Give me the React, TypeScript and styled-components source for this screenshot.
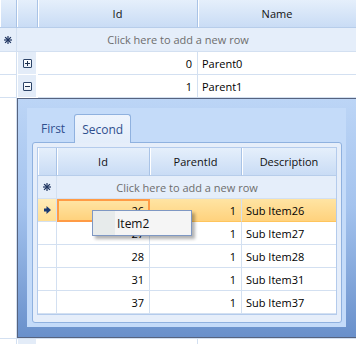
import { Fragment } from "react";
import styled, { createGlobalStyle, css } from "styled-components";

const GlobalStyle = createGlobalStyle`
    * {
        box-sizing: border-box;
    }
    body {
        margin: 0;
        background: #ffffff;
        font-family: "Open Sans", "Noto Sans", sans-serif;
        font-size: 11px;
        color: #000000;
        overflow: hidden;
    }
`;

const Page = styled.div`
    position: relative;
    width: 356px;
    height: 344px;
    overflow: hidden;
`;

// outer master grid
const MasterGrid = styled.div`
    display: grid;
    grid-template-columns: 17px 21px 160px 1fr;
`;

const headerBg = css`
    background: linear-gradient(#e5effb, #c9dcf5);
`;

const HeadCell = styled.div<{ $last?: boolean }>`
    ${headerBg};
    height: 28px;
    display: flex;
    align-items: center;
    justify-content: center;
    border-right: ${(p) => (p.$last ? "none" : "1px solid #a9c3e6")};
    border-bottom: 1px solid #b7cdea;
    box-shadow: inset 1px 0 0 #ffffff;
    color: #111;
`;

const IndicatorCell = styled.div<{ $kind?: "new" | "plain" | "current"; $h?: number }>`
    height: ${(p) => p.$h ?? 23}px;
    display: flex;
    align-items: center;
    justify-content: center;
    border-right: 1px solid #d3e0f1;
    border-bottom: 1px solid #d3e0f1;
    background: ${(p) =>
        p.$kind === "new" ? "#e5eefa" : p.$kind === "current" ? "linear-gradient(#ffecb8, #ffdf95)" : "#ffffff"};
`;

const NewRowText = styled.div<{ $span: string; $shift: number; $h?: number }>`
    grid-column: ${(p) => p.$span};
    height: ${(p) => p.$h ?? 24}px;
    display: flex;
    align-items: center;
    justify-content: center;
    padding-right: ${(p) => p.$shift}px;
    background: #e5eefa;
    color: #6d6d6d;
    border-bottom: 1px solid #d3e0f1;
`;

const ExpandCell = styled.div`
    height: 23px;
    display: flex;
    align-items: center;
    justify-content: center;
    background: #e3ecf8;
    border-right: 2px solid #ffffff;
    border-bottom: 1px solid #ffffff;
    border-left: 1px solid #ffffff;
`;

const ExpandBox = styled.div`
    width: 9px;
    height: 9px;
    border: 1px solid #2d4468;
    border-radius: 1px;
    background: linear-gradient(#ffffff, #e8eef6);
    position: relative;
    &::before {
        content: "";
        position: absolute;
        left: 1px;
        right: 1px;
        top: 3px;
        height: 1px;
        background: #1d2f4d;
    }
`;

const PlusBox = styled(ExpandBox)`
    &::after {
        content: "";
        position: absolute;
        top: 1px;
        bottom: 1px;
        left: 3px;
        width: 1px;
        background: #1d2f4d;
    }
`;

const Cell = styled.div<{ $right?: boolean; $last?: boolean; $h?: number }>`
    height: ${(p) => p.$h ?? 23}px;
    display: flex;
    align-items: center;
    justify-content: ${(p) => (p.$right ? "flex-end" : "flex-start")};
    padding: 0 4px 0 4px;
    padding-right: ${(p) => (p.$right ? 5 : 4)}px;
    border-right: ${(p) => (p.$last ? "none" : "1px solid #d3e0f1")};
    border-bottom: 1px solid #d3e0f1;
    white-space: nowrap;
    overflow: hidden;
`;

const DetailHost = styled.div`
    grid-column: 2 / 5;
    border-bottom: 1px solid #d3e0f1;
`;

const DetailFrame = styled.div`
    border-top: 1px solid #56637f;
    border-left: 1px solid #56637f;
    border-bottom: 1px solid #56637f;
    background: linear-gradient(#bcd5f6, #a4c3ee 45%, #6990cb);
    padding: 9px 10px 10px 9px;
`;

const Panel = styled.div`
    background: #c4dbf9;
    padding: 6px 4px 4px 5px;
`;

const TabStrip = styled.div`
    display: flex;
    height: 28px;
    position: relative;
    z-index: 1;
`;

const Tab = styled.div<{ $active?: boolean }>`
    display: flex;
    align-items: center;
    color: #2f4f8e;
    font-size: 12px;
    padding: 0 ${(p) => (p.$active ? 7 : 9)}px;
    ${(p) =>
        p.$active &&
        css`
            height: 29px;
            background: linear-gradient(#eef4fd, #e3edfa);
            border: 1px solid #8fb1df;
            border-bottom: none;
            border-radius: 3px 3px 0 0;
        `}
`;

const TabPage = styled.div`
    background: #e6eefa;
    border: 1px solid #8fb1df;
    border-radius: 3px;
    padding: 4px 4px 7px 4px;
`;

const DetailGrid = styled.div`
    display: grid;
    grid-template-columns: 19px 93px 92px 1fr;
    border: 1px solid #b4cbec;
    background: #ffffff;
`;

const CurrentCell = styled(Cell)<{ $focus?: boolean }>`
    background: linear-gradient(#ffe4a3, #ffd27d);
    border-bottom-color: #ffc55d;
    ${(p) =>
        p.$focus &&
        css`
            border: 2px solid #ff9b45;
            padding-right: 4px;
        `}
`;

const ContextMenu = styled.div`
    position: absolute;
    left: 92px;
    top: 210px;
    width: 100px;
    height: 26px;
    display: flex;
    background: #f5f5f5;
    border: 1px solid #7f98c3;
    box-shadow: 3px 3px 3px rgba(0, 0, 0, 0.3);
    z-index: 5;
`;

const MenuGutter = styled.div`
    width: 22px;
    background: #e7ebeb;
`;

const MenuItem = styled.div`
    display: flex;
    align-items: center;
    padding-left: 2px;
    font-size: 12px;
    color: #111;
`;

const Asterisk = () => (
    <svg width="8" height="8" viewBox="0 0 8 8">
        <g stroke="#1f3560" strokeWidth="1.2" strokeLinecap="square">
            <line x1="4" y1="0.5" x2="4" y2="7.5" />
            <line x1="0.5" y1="4" x2="7.5" y2="4" />
            <line x1="1.5" y1="1.5" x2="6.5" y2="6.5" />
            <line x1="6.5" y1="1.5" x2="1.5" y2="6.5" />
        </g>
    </svg>
);

const CurrentArrow = () => (
    <svg width="7" height="8" viewBox="0 0 7 8">
        <path d="M0 2.5 H2.5 V0 L7 4 L2.5 8 V5.5 H0 Z" fill="#1b3a72" />
    </svg>
);

const subRows = [
    { id: 27, desc: "Sub Item27" },
    { id: 28, desc: "Sub Item28" },
    { id: 31, desc: "Sub Item31" },
    { id: 37, desc: "Sub Item37" },
];

function App() {
    return (
        <Page>
            <GlobalStyle />
            <MasterGrid>
                <HeadCell />
                <HeadCell />
                <HeadCell>Id</HeadCell>
                <HeadCell $last>Name</HeadCell>

                <IndicatorCell $kind="new" $h={24}>
                    <Asterisk />
                </IndicatorCell>
                <NewRowText $span="2 / 5" $shift={17}>
                    Click here to add a new row
                </NewRowText>

                <IndicatorCell />
                <ExpandCell>
                    <PlusBox />
                </ExpandCell>
                <Cell $right>0</Cell>
                <Cell $last>Parent0</Cell>

                <IndicatorCell />
                <ExpandCell>
                    <ExpandBox />
                </ExpandCell>
                <Cell $right>1</Cell>
                <Cell $last>Parent1</Cell>

                <IndicatorCell $h={241} />
                <DetailHost>
                    <DetailFrame>
                        <Panel>
                            <TabStrip>
                                <Tab>First</Tab>
                                <Tab $active>Second</Tab>
                            </TabStrip>
                            <TabPage>
                                <DetailGrid>
                                    <HeadCell />
                                    <HeadCell>Id</HeadCell>
                                    <HeadCell>ParentId</HeadCell>
                                    <HeadCell $last>Description</HeadCell>

                                    <IndicatorCell $kind="new">
                                        <Asterisk />
                                    </IndicatorCell>
                                    <NewRowText $span="2 / 5" $shift={19} $h={23}>
                                        Click here to add a new row
                                    </NewRowText>

                                    <IndicatorCell $kind="current">
                                        <CurrentArrow />
                                    </IndicatorCell>
                                    <CurrentCell $right $focus>
                                        26
                                    </CurrentCell>
                                    <CurrentCell $right>1</CurrentCell>
                                    <CurrentCell $last>Sub Item26</CurrentCell>

                                    {subRows.map((r) => (
                                        <Fragment key={r.id}>
                                            <IndicatorCell />
                                            <Cell $right>{r.id}</Cell>
                                            <Cell $right>1</Cell>
                                            <Cell $last>{r.desc}</Cell>
                                        </Fragment>
                                    ))}
                                </DetailGrid>
                            </TabPage>
                        </Panel>
                    </DetailFrame>
                </DetailHost>

                {/* next master row, only its top edge shows */}
                <IndicatorCell />
                <ExpandCell />
                <Cell $right />
                <Cell $last />
            </MasterGrid>

            <ContextMenu>
                <MenuGutter />
                <MenuItem>Item2</MenuItem>
            </ContextMenu>
        </Page>
    );
}

export default App;
